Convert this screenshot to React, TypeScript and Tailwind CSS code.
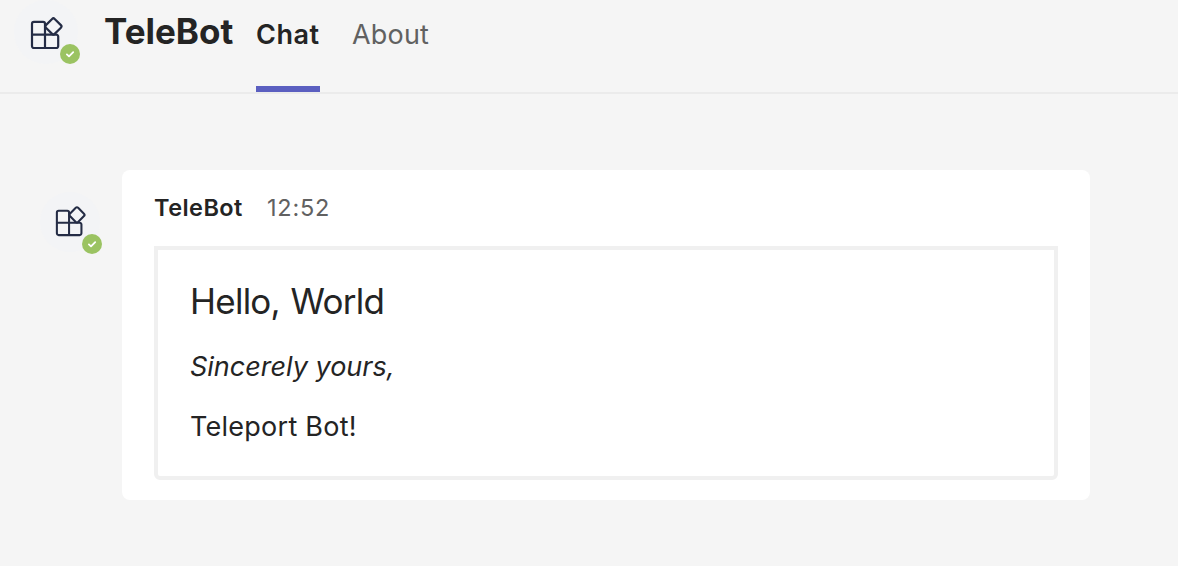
function BotAvatar({ small = false }: { small?: boolean }) {
  return (
    <div className={small ? 'relative h-15 w-15 shrink-0' : 'relative h-16 w-16 shrink-0'}>
      <svg viewBox="0 0 64 64" className="h-full w-full" fill="none" stroke="#242c45" strokeWidth="2.2" strokeLinejoin="round">
        <circle cx="32" cy="32" r="32" fill="#f3f4f6" stroke="none" />
        <g className={small ? '-translate-y-[2px]' : ''}>
          <path d="M31 34.7V23.8a1.9 1.9 0 0 0-1.9-1.9H19.9a1.9 1.9 0 0 0-1.9 1.9V46.1a1.9 1.9 0 0 0 1.9 1.9H42.3a1.9 1.9 0 0 0 1.9-1.9V36.6a1.9 1.9 0 0 0-1.9-1.9H18M31 34.5V48" />
          <rect x="33.2" y="20.2" width="12.4" height="12.4" rx="1.8" transform="rotate(45 39.4 26.4)" />
        </g>
      </svg>
      <svg
        viewBox="0 0 20 20"
        className={small ? 'absolute -right-0.5 -bottom-0.5 h-5 w-5' : 'absolute -right-0.5 bottom-0 h-5 w-5'}
      >
        <circle cx="10" cy="10" r="10" fill="#9bc362" />
        <path d="m6.9 10.4 2.1 2 4.2-4.3" fill="none" stroke="#fff" strokeWidth="1.8" strokeLinecap="round" strokeLinejoin="round" />
      </svg>
    </div>
  );
}

export default function App() {
  return (
    <div className="h-[566px] w-[1178px] overflow-hidden bg-[#f5f5f5] font-['Inter',sans-serif] text-[#242424]">
      <header className="flex h-[94px] items-start border-b-2 border-[#ebebeb] pl-3.5">
        <BotAvatar />
        <h1 className="mt-[11px] ml-[26px] w-[152px] text-[35px] leading-10 font-bold whitespace-nowrap">TeleBot</h1>
        <nav className="flex h-[92px] gap-8 text-[27px] leading-9">
          <div className="h-full w-16 border-b-6 border-[#5b5fc0] pt-[17px] font-semibold tracking-[0.5px] whitespace-nowrap">Chat</div>
          <div className="pt-[17px] tracking-[0.2px] whitespace-nowrap text-[#616161]">About</div>
        </nav>
      </header>
      <main className="flex pt-[76px] pl-10">
        <div className="pt-[22px]">
          <BotAvatar small />
        </div>
        <article className="ml-[22px] h-[330px] w-[968px] rounded-lg bg-white px-8 pt-[22px]">
          <div className="flex gap-6 text-[23.5px] leading-8">
            <span className="w-[89px] font-semibold tracking-[0.45px] whitespace-nowrap">TeleBot</span>
            <time className="tracking-[0.75px] text-[#616161]">12:52</time>
          </div>
          <div className="mt-[22px] h-[234px] w-[904px] rounded-b-md border-4 border-[#f0f0f0] pt-[31px] pl-8">
            <p className="text-[35px] leading-10 tracking-[-0.75px] [word-spacing:1.5px]">Hello, World</p>
            <p className="mt-7 text-[27px] leading-9 italic">Sincerely yours,</p>
            <p className="mt-6 text-[27px] leading-9 tracking-[0.25px]">Teleport Bot!</p>
          </div>
        </article>
      </main>
    </div>
  );
}
